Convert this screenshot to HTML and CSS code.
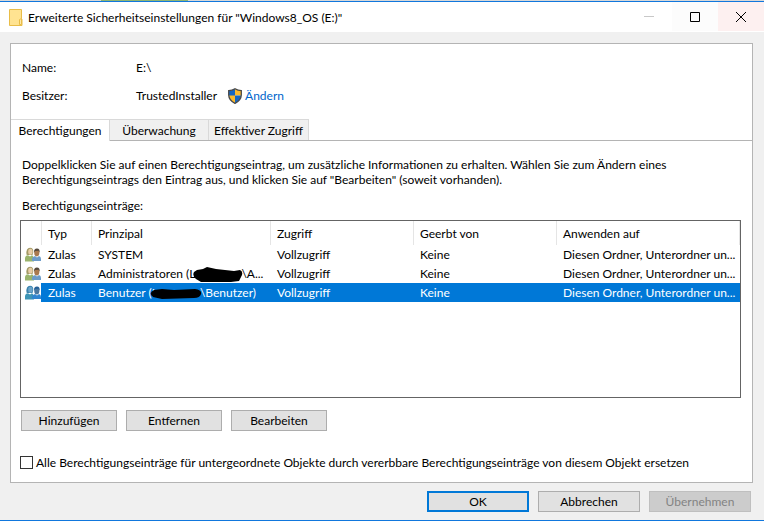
FILE: index.html
```
<!DOCTYPE html>
<html lang="de">
<head>
    <meta charset="UTF-8">
    <meta name="viewport" content="width=device-width, initial-scale=1.0">
    <title>Erweiterte Sicherheitseinstellungen</title>
    <link rel="stylesheet" href="styles.css">
</head>
<body>
    <svg class="symbols" width="0" height="0" aria-hidden="true">
        <symbol id="users" viewBox="0 0 16 15">
            <path class="shirt-left" d="M0 14.500V11.500Q0 8.500 3 8.200L5 9.500 7 8.200Q9 9 9 14.500Z"/>
            <path class="hair-left" d="M1.500 7.500Q.8 1 5 .8Q8.800 1 8.200 5.500L7.500 8H2Z"/>
            <ellipse class="face-left" cx="5.400" cy="4.800" rx="2.200" ry="3"/>
            <path class="shirt-right" d="M7 14V11.500Q7.500 9.500 10 9L12 10.500 14 9Q16 9.500 16 12V14Z"/>
            <ellipse class="face-right" cx="11.800" cy="5.800" rx="2.600" ry="3.600"/>
            <path class="hair-right" d="M9 5.500Q8.800 1.500 12 1.500Q15 1.700 14.600 5.500L13.500 3.800 10.200 4Z"/>
        </symbol>
    </svg>

    <div class="backdrop"></div>
    <div class="window">
        <header class="titlebar">
            <svg class="folder" width="14" height="17" viewBox="0 0 14 17" aria-hidden="true">
                <path d="M.5.5H12.500V9.500L13 10.500V16.500H.5Z" fill="#ffe391" stroke="#e9bd48"/>
                <path d="M10.500 15.500V10.500L12.500 9.500V15.500Z" fill="#ffe9a8" stroke="#e9bd48"/>
            </svg>
            <h1>Erweiterte Sicherheitseinstellungen für "Windows8_OS (E:)"</h1>
            <button class="caption" aria-label="Minimieren" disabled>
                <svg width="10" height="10" viewBox="0 0 10 10"><path d="M0 4.500H10" stroke="#c8c8c8"/></svg>
            </button>
            <button class="caption maximize" aria-label="Maximieren">
                <svg width="10" height="10" viewBox="0 0 10 10"><path d="M.5.5H9.500V9.500H.5Z" fill="none" stroke="#000"/></svg>
            </button>
            <button class="caption close" aria-label="Schließen">
                <svg width="10" height="10" viewBox="0 0 10 10"><path d="M0 0L10 10M10 0L0 10" stroke="#000"/></svg>
            </button>
        </header>

        <main class="panel">
            <dl class="object-info">
                <dt>Name:</dt>
                <dd>E:\</dd>
                <dt>Besitzer:</dt>
                <dd>
                    TrustedInstaller
                    <a class="change" href="#">
                        <svg width="14" height="16" viewBox="0 0 14 16" aria-hidden="true">
                            <path d="M7 .8Q4 2.700.7 2.700V7Q.9 12.500 7 15.300Z" fill="#1767c2"/>
                            <path d="M7 .8Q10 2.700 13.300 2.700V7.500H7Z" fill="#fdbb2d"/>
                            <path d="M.8 7.500H7V15.300Q1.500 12.500.8 7.500Z" fill="#fdbb2d"/>
                            <path d="M7 7.500H13.200Q12.500 12.500 7 15.300Z" fill="#1767c2"/>
                            <path d="M7 .8Q4 2.700.7 2.700V7Q.9 12.500 7 15.300Q13.100 12.500 13.300 7V2.700Q10 2.700 7 .8Z" fill="none" stroke="#4a4a4a" stroke-width="1.300"/>
                        </svg>
                        Ändern
                    </a>
                </dd>
            </dl>

            <div class="tabs" role="tablist">
                <button class="tab active" role="tab" aria-selected="true">Berechtigungen</button>
                <button class="tab" role="tab" aria-selected="false">Überwachung</button>
                <button class="tab" role="tab" aria-selected="false">Effektiver Zugriff</button>
            </div>

            <section class="content">
                <p class="hint">Doppelklicken Sie auf einen Berechtigungseintrag, um zusätzliche Informationen zu erhalten. Wählen Sie zum Ändern eines Berechtigungseintrags den Eintrag aus, und klicken Sie auf "Bearbeiten" (soweit vorhanden).</p>
                <p class="list-label" id="entries-label">Berechtigungseinträge:</p>

                <div class="list">
                    <table aria-labelledby="entries-label">
                        <colgroup>
                            <col class="col-icon">
                            <col class="col-type">
                            <col class="col-principal">
                            <col class="col-access">
                            <col class="col-inherited">
                            <col>
                        </colgroup>
                        <thead>
                            <tr>
                                <th></th>
                                <th>Typ</th>
                                <th>Prinzipal</th>
                                <th>Zugriff</th>
                                <th>Geerbt von</th>
                                <th>Anwenden auf</th>
                            </tr>
                        </thead>
                        <tbody>
                            <tr>
                                <td><svg class="users" width="16" height="15"><use href="#users"/></svg></td>
                                <td>Zulas</td>
                                <td>SYSTEM</td>
                                <td>Vollzugriff</td>
                                <td>Keine</td>
                                <td>Diesen Ordner, Unterordner un...</td>
                            </tr>
                            <tr>
                                <td><svg class="users" width="16" height="15"><use href="#users"/></svg></td>
                                <td>Zulas</td>
                                <td>Administratoren (L<svg class="redacted" width="50" height="16" viewBox="0 0 50 16"><path d="M4 3L10 2 14 0 23 2 41 4 47 3Q50 4 49 8L46 14 38 15H8L3 12Q-1 9 1 5Z"/></svg>\A...</td>
                                <td>Vollzugriff</td>
                                <td>Keine</td>
                                <td>Diesen Ordner, Unterordner un...</td>
                            </tr>
                            <tr class="selected">
                                <td><svg class="users" width="16" height="15"><use href="#users"/></svg></td>
                                <td>Zulas</td>
                                <td>Benutzer (L<svg class="redacted" width="52" height="10" viewBox="0 0 52 10"><path d="M4 1L12 0 24 1 45 0Q52 1 51 5Q50 9 44 9L12 10 3 8Q-2 4 4 1Z"/></svg>\Benutzer)</td>
                                <td>Vollzugriff</td>
                                <td>Keine</td>
                                <td>Diesen Ordner, Unterordner un...</td>
                            </tr>
                        </tbody>
                    </table>
                </div>

                <div class="actions">
                    <button class="btn">Hinzufügen</button>
                    <button class="btn">Entfernen</button>
                    <button class="btn">Bearbeiten</button>
                </div>

                <label class="replace">
                    <input type="checkbox">
                    Alle Berechtigungseinträge für untergeordnete Objekte durch vererbbare Berechtigungseinträge von diesem Objekt ersetzen
                </label>
            </section>
        </main>

        <footer class="dialog-buttons">
            <button class="btn default">OK</button>
            <button class="btn">Abbrechen</button>
            <button class="btn" disabled>Übernehmen</button>
        </footer>
    </div>
</body>
</html>
```
FILE: styles.css
```
* {
    box-sizing: border-box;
}

body {
    margin: 0;
    min-height: 100vh;
    display: flex;
    flex-direction: column;
    font-family: Lato, "Open Sans", sans-serif;
    font-size: 12px;
    line-height: 15px;
    color: #000;
}

button {
    font: inherit;
    color: inherit;
    padding: 0;
}

.symbols {
    position: absolute;
}

/* strip of the window behind the dialog */
.backdrop {
    height: 1px;
    background: linear-gradient(to right, #d8d8d8 101px, #8fb573 101px, #8fb573 188px, #d8d8d8 188px);
}

.window {
    flex: 1;
    display: flex;
    flex-direction: column;
    background-color: #f0f0f0;
    border-top: 1px solid #1177dd;
    border-bottom: 1px solid #1177dd;
}

.titlebar {
    display: flex;
    align-items: center;
    height: 30px;
    padding-left: 9px;
    background-color: #fff;
}

.titlebar h1 {
    flex: 1;
    margin: 0 0 0 5px;
    font-size: 12px;
    font-weight: normal;
}

.caption {
    display: flex;
    align-items: center;
    justify-content: center;
    width: 46px;
    height: 29px;
    align-self: flex-start;
    border: none;
    background-color: #fff;
}

.caption.maximize {
    background-color: #fcfcfc;
}

.caption.close {
    background-color: #fdf0f0;
}

.panel {
    flex: 1;
    display: flex;
    flex-direction: column;
    margin: 11px 11px 0 10px;
    background-color: #fff;
    border: 1px solid #b4b4b4;
}

.object-info {
    display: grid;
    grid-template-columns: 114px 1fr;
    row-gap: 12px;
    margin: 0;
    padding: 16px 11px 15px;
    line-height: 16px;
}

.object-info dd {
    display: flex;
    gap: 11px;
    margin: 0;
}

.change {
    display: flex;
    gap: 3px;
    color: #0066cc;
    text-decoration: none;
}

.tabs {
    display: flex;
    height: 22px;
    border-bottom: 1px solid #b4b4b4;
}

.tab {
    width: 99px;
    height: 21px;
    border: 1px solid #d9d9d9;
    border-left: none;
    border-bottom: none;
    background-color: #f0f0f0;
    white-space: nowrap;
}

.tab:last-child {
    width: 100px;
}

.tab.active {
    height: 22px;
    background-color: #fff;
}

.content {
    flex: 1;
    display: flex;
    flex-direction: column;
    padding: 16px 11px 12px 9px;
}

.hint {
    margin: 0 60px 0 2px;
}

.list-label {
    margin: 11px 2px 7px;
}

.list {
    flex: 1;
    border: 1px solid #646464;
    overflow: hidden;
}

table {
    width: 100%;
    table-layout: fixed;
    border-collapse: separate;
    border-spacing: 0;
}

.col-icon {
    width: 20px;
}

.col-type {
    width: 50px;
}

.col-principal {
    width: 179px;
}

.col-access,
.col-inherited {
    width: 143px;
}

th,
td {
    height: 19px;
    padding: 0 0 0 7px;
    font-weight: normal;
    text-align: left;
    white-space: nowrap;
}

th {
    height: 24px;
    padding-left: 6px;
    border-left: 1px solid #e5e5e5;
}

th:first-child {
    border-left: none;
}

th:last-child {
    border-right: 1px solid #e5e5e5;
}

td:first-child {
    padding: 0 0 0 4px;
}

.selected td:not(:first-child) {
    background-color: #0078d7;
    color: #fff;
}

.users {
    display: block;
    --shirt-left: #9ab36c;
    --hair-left: #a39a66;
    --face-left: #e8cda6;
    --shirt-right: #6d9cc9;
    --face-right: #a9794f;
    --hair-right: #54483c;
}

/* icon tinted by the selection */
.selected .users {
    --shirt-left: #3d94b5;
    --hair-left: #3b83ad;
    --face-left: #6ba5cb;
    --shirt-right: #3085d0;
    --face-right: #4a78a0;
    --hair-right: #235f96;
}

.shirt-left { fill: var(--shirt-left); }
.hair-left { fill: var(--hair-left); }
.face-left { fill: var(--face-left); }
.shirt-right { fill: var(--shirt-right); }
.face-right { fill: var(--face-right); }
.hair-right { fill: var(--hair-right); }

.redacted {
    margin: -4px -2px -4px -2px;
    vertical-align: middle;
}

.selected .redacted {
    margin-left: -8px;
}

.btn {
    width: 96px;
    height: 21px;
    line-height: 17px;
    border: 1px solid #adadad;
    background-color: #e1e1e1;
}

.btn.default {
    border: 2px solid #0078d7;
}

.btn:disabled {
    color: #838383;
    background-color: #cccccc;
    border-color: #bfbfbf;
}

.actions {
    display: flex;
    gap: 9px;
    margin: 12px 1px 24px;
}

.replace {
    display: flex;
    align-items: center;
    gap: 3px;
    white-space: nowrap;
}

.replace input {
    appearance: none;
    width: 13px;
    height: 13px;
    margin: 0;
    border: 1px solid #333;
    background-color: #fff;
}

.dialog-buttons {
    display: flex;
    justify-content: flex-end;
    gap: 9px;
    padding: 8px 13px;
}

.dialog-buttons .btn {
    width: 102px;
}
```
